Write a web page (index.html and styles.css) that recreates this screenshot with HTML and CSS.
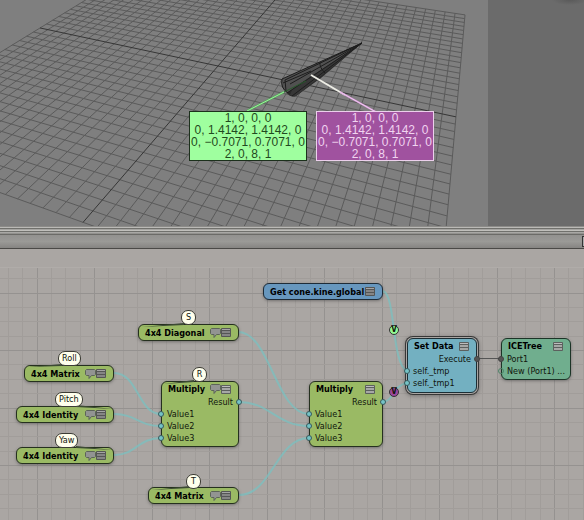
FILE: index.html
```
<!DOCTYPE html>
<html lang="en">
<head>
<meta charset="utf-8">
<title>ICE Tree</title>
<link rel="stylesheet" href="styles.css">
</head>
<body>
<svg class="defs" aria-hidden="true">
  <symbol id="note" viewBox="0 0 11 10">
    <path d="M1.500 .5h8l1 1v4l-1 1h-3l-2.500 3v-3h-2.500l-1-1v-4z" fill="#929492" stroke="#5c6458"/>
  </symbol>
  <symbol id="list" viewBox="0 0 10 9">
    <rect width="10" height="9" rx="1" fill="#555655"/>
    <path d="M1 1.500h8" stroke="#a4a4a4"/>
    <path d="M1 4h8M1 7h8" stroke="#858585" stroke-width="2"/>
  </symbol>
  <symbol id="list-light" viewBox="0 0 10 9">
    <rect width="10" height="9" rx="1" fill="#5c605e"/>
    <path d="M1 1.500h8" stroke="#bcbcbc"/>
    <path d="M1 4h8M1 7h8" stroke="#a6a8a6" stroke-width="2"/>
  </symbol>
</svg>

<main class="app">
  <section class="viewport" aria-label="Camera view">
    <div class="scene">
      <svg class="layer" aria-hidden="true">
        <g id="floor"></g>
        <path d="M362 43L282 79Q280 87 287 93Q291 98 296 96L322 77Z" fill="#515151"/>
        <path d="M362 43L306 80L287 93Q291 98 296 96L322 77Z" fill="#2b2b2b"/>
        <path d="M362 43L293 88L290 95L296 96Z" fill="#3d3d3d" opacity=".7"/>
        <path d="M362 43L282 79Q280 88 288 93M362 43L285 80L286 91M362 43L290 84M362 43L287 93M362 43L292 96M320 62Q319 67 325 73M283 83l28-12" fill="none" stroke="#1d1d1d"/>
        <path d="M247 111L284 92" stroke="#58a95c" stroke-width="2"/>
        <path d="M247 111L284 92" stroke="#9bf39c"/>
        <path d="M284 92L306 81" stroke="#285a2c"/>
        <path d="M311 75L345 95" stroke="#eeeee6" stroke-width="2"/>
        <path d="M340 92L376 112" stroke="#d08fd2" stroke-width="2"/>
        <path d="M340 92L376 112" stroke="#efcdf0"/>
      </svg>
      <div class="matrix matrix-green">1, 0, 0, 0<br>0, 1.4142, 1.4142, 0<br>0, −0.7071, 0.7071, 0<br>2, 0, 8, 1</div>
      <div class="matrix matrix-purple">1, 0, 0, 0<br>0, 1.4142, 1.4142, 0<br>0, −0.7071, 0.7071, 0<br>2, 0, 8, 1</div>
    </div>
    <div class="margin"></div>
  </section>
  <div class="splitter"></div>
  <header class="titlebar"><button class="maximize" type="button" aria-label="Maximize"></button></header>
  <div class="toolbar"></div>

  <section class="graph" aria-label="ICE tree">
    <svg class="layer" aria-hidden="true">
      <g id="paper"></g>
      <g class="wires">
        <path d="M238 64C270 64 276 146 309 146"/>
        <path d="M114 105C138 105 138 146 161 146"/>
        <path d="M114 146C136 146 138 158 161 158"/>
        <path d="M114 187C136 187 138 170 161 170"/>
        <path d="M239 134C270 134 276 158 309 158"/>
        <path d="M239 227C272 227 276 170 309 170"/>
        <path d="M383 23C396 27 391 95 407 103"/>
        <path d="M383 134C394 133 393 117 407 115"/>
        <path class="run" d="M477 90.500H501"/>
      </g>
    </svg>

    <article class="node bar green n-diagonal"><h2>4x4 Diagonal</h2><svg class="note"><use href="#note"/></svg><svg class="list"><use href="#list"/></svg></article>
    <article class="node bar green n-roll"><h2>4x4 Matrix</h2><svg class="note"><use href="#note"/></svg><svg class="list"><use href="#list"/></svg></article>
    <article class="node bar green n-pitch"><h2>4x4 Identity</h2><svg class="note"><use href="#note"/></svg><svg class="list"><use href="#list"/></svg></article>
    <article class="node bar green n-yaw"><h2>4x4 Identity</h2><svg class="note"><use href="#note"/></svg><svg class="list"><use href="#list"/></svg></article>
    <article class="node bar green n-trans"><h2>4x4 Matrix</h2><svg class="note"><use href="#note"/></svg><svg class="list"><use href="#list"/></svg></article>
    <article class="node bar blue n-get"><h2>Get cone.kine.global</h2><svg class="list"><use href="#list"/></svg></article>

    <article class="node green n-rotate">
      <header><h2>Multiply</h2><svg class="note"><use href="#note"/></svg><svg class="list"><use href="#list-light"/></svg></header>
      <ul>
        <li class="out">Result<i></i></li>
        <li><i></i>Value1</li>
        <li><i></i>Value2</li>
        <li><i></i>Value3</li>
      </ul>
    </article>
    <article class="node green n-multiply">
      <header><h2>Multiply</h2><svg class="list"><use href="#list-light"/></svg></header>
      <ul>
        <li class="out">Result<i></i></li>
        <li><i></i>Value1</li>
        <li><i></i>Value2</li>
        <li><i></i>Value3</li>
      </ul>
    </article>
    <article class="node cyan selected n-set">
      <header><h2>Set Data</h2><svg class="list"><use href="#list-light"/></svg></header>
      <ul>
        <li class="out">Execute<i class="run"></i></li>
        <li><i></i>self._tmp</li>
        <li><i></i>self._tmp1</li>
      </ul>
    </article>
    <article class="node teal n-tree">
      <header><h2>ICETree</h2><svg class="list"><use href="#list-light"/></svg></header>
      <ul>
        <li><i class="run"></i>Port1</li>
        <li><i class="empty"></i>New (Port1) ...</li>
      </ul>
    </article>

    <svg class="layer tails" aria-hidden="true">
      <path d="M62 96l-34 3l34-1zM76 137l37 4l-37-2zM76 178l37 4l-37-2zM184 55l-42 4l42-2zM194 112l-30 4l30-2zM190 218l-38 4l38-2z"/>
    </svg>
    <span class="tag t-roll">Roll</span>
    <span class="tag t-pitch">Pitch</span>
    <span class="tag t-yaw">Yaw</span>
    <span class="tag t-s">S</span>
    <span class="tag t-r">R</span>
    <span class="tag t-t">T</span>
    <span class="probe probe-green">V</span>
    <span class="probe probe-purple">V</span>
  </section>
</main>
<script src="grid.js"></script>
</body>
</html>
```
FILE: styles.css
```
* { box-sizing: border-box; }

body {
  margin: 0;
  font-family: "DejaVu Sans Condensed", "DejaVu Sans", sans-serif;
  font-size: 9px;
  line-height: 12px;
  color: #10150c;
  background: #aaa6a3;
}

h2, ul { margin: 0; padding: 0; }
.defs { position: absolute; width: 0; height: 0; }

.app {
  display: flex;
  flex-direction: column;
  min-height: 100vh;
  overflow: hidden;
}

.layer {
  position: absolute;
  inset: 0;
  width: 100%;
  height: 100%;
}

/* 3D view */
.viewport { display: flex; height: 226px; }
.scene {
  position: relative;
  flex: 1;
  overflow: hidden;
  background: #7f7f7f;
}
.margin {
  width: 96px;
  background: radial-gradient(ellipse 18px 5px at 82px 0, #5a5a5a, #6b6b6b);
}
#floor line { stroke: #5b5b5b; }
#floor .axis { stroke: #363636; }

.matrix {
  position: absolute;
  top: 111px;
  width: 118px;
  border: 1px solid;
  font: 12px/12px "Liberation Sans", sans-serif;
  text-align: center;
  white-space: nowrap;
}
.matrix-green { left: 189px; color: #1f4a20; background: #9fff9f; border-color: #1c301c; }
.matrix-purple { left: 316px; color: #f0d4f0; background: #a0529f; border-color: #ecd0ec; }

/* Panel chrome */
.splitter {
  height: 9px;
  background: linear-gradient(#8c8b88 0 1px, #bab9b6 1px 2px, #70706c 2px 3px, #a5a4a1 3px 4px, #c0bfbb 4px 5px, #70706c 5px 6px, #a9a8a5 6px 7px, #92918e 7px 8px, #6c6b68 8px);
}
.titlebar {
  display: flex;
  justify-content: flex-end;
  align-items: center;
  height: 14px;
  overflow: hidden;
  border-bottom: 1px solid #4b4947;
  background: linear-gradient(#92918f, #9b9a97 50%, #868482);
}
.maximize {
  width: 10px;
  height: 11px;
  margin-right: -8px;
  padding: 0;
  flex: none;
  border: 1px solid #333;
  background: #aaa;
}
.toolbar { height: 19px; background: #aaa6a3; border-bottom: 1px solid #b0aca9; }

/* Node graph */
.graph { position: relative; flex: 1; min-height: 252px; background: #aaa6a3; }
#paper line { stroke: #a19d9a; }
#paper .major { stroke: #959290; }
.wires { fill: none; stroke: #79c0c0; stroke-width: 2; stroke-opacity: .75; }
.wires .run { stroke: #555; stroke-width: 1; stroke-opacity: 1; }
.tails { fill: #3c4a34; }

.node {
  position: absolute;
  border: 1px solid #25301f;
  border-radius: 6px;
  box-shadow: 0 1px 3px #4448;
}
.node h2 { flex: 1; font-size: 9px; line-height: 14px; font-weight: bold; white-space: nowrap; color: #000; }
.bar { display: flex; align-items: center; height: 17px; padding: 0 7px 0 6px; }
.node header { display: flex; align-items: center; height: 14px; padding: 0 7px 0 6px; }
.node ul { list-style: none; padding-bottom: 2px; }
.node li { position: relative; height: 12px; padding: 0 5px; white-space: nowrap; }
.node .out { text-align: right; }
.node svg { flex: none; }
.note { width: 11px; height: 10px; }
.list { width: 10px; height: 9px; }

.node i {
  position: absolute;
  left: -4px;
  top: 3px;
  width: 6px;
  height: 6px;
  border: 1px solid #37595c;
  border-radius: 50%;
  background: #75c3c6;
}
.node .out i { left: auto; right: -4px; }
.node .run { background: #555; border-color: #444; }
.node .empty { background: none; border-color: #4d8568; }

.green { background: #9aba64; }
.blue { background: #6797be; border-color: #1e2c38; }
.cyan { background: #73b0c1; border-color: #1b2e35; }
.teal { background: #70ae8e; border-color: #1c3427; }
.selected { box-shadow: 0 0 0 1px #aaa6a3, 0 0 0 2px #363636, 0 1px 4px 2px #4448; }

.n-diagonal { left: 138px; top: 56px; width: 101px; }
.n-roll { left: 24px; top: 97px; width: 90px; }
.n-pitch { left: 16px; top: 138px; width: 98px; }
.n-yaw { left: 16px; top: 179px; width: 98px; }
.n-trans { left: 148px; top: 219px; width: 91px; }
.n-get { left: 263px; top: 15px; width: 120px; }
.n-rotate { left: 161px; top: 113px; width: 78px; }
.n-multiply { left: 309px; top: 113px; width: 74px; }
.n-set { left: 407px; top: 70px; width: 70px; padding-bottom: 1px; }
.n-tree { left: 501px; top: 70px; width: 70px; }

.tag {
  position: absolute;
  min-width: 15px;
  height: 15px;
  padding: 0 3px;
  border: 1px solid #3b3b34;
  border-radius: 7px;
  background: #ffffec;
  line-height: 13px;
  text-align: center;
}
.t-roll { left: 58px; top: 83px; }
.t-pitch { left: 55px; top: 124px; }
.t-yaw { left: 55px; top: 165px; }
.t-s { left: 181px; top: 42px; }
.t-r { left: 192px; top: 99px; }
.t-t { left: 186px; top: 206px; }

.probe {
  position: absolute;
  left: 389px;
  width: 10px;
  height: 10px;
  border: 1px solid #333;
  border-radius: 50%;
  font-weight: bold;
  font-size: 8px;
  line-height: 8px;
  text-align: center;
}
.probe-green { top: 57px; background: #93fa93; }
.probe-purple { top: 119px; background: #9a479c; }
```
FILE: grid.js
```
const NS = 'http://www.w3.org/2000/svg';

function line(parent, x1, y1, x2, y2, cls) {
  const el = document.createElementNS(NS, 'line');
  Object.entries({ x1, y1, x2, y2 }).forEach(([k, v]) => el.setAttribute(k, v));
  if (cls) el.setAttribute('class', cls);
  parent.appendChild(el);
}

// Perspective projection of the floor plane, u and v in -1..1.
function project(u, v) {
  const w = 1 - 0.1442 * u + 0.333 * v;
  return [(172.2 * u + 162.6 * v + 218) / w, (34 * u - 82.3 * v + 66) / w];
}

const floor = document.getElementById('floor');
const cells = 20;
for (let i = -cells; i <= cells; i++) {
  if (i === 0) continue;
  const t = i / cells;
  line(floor, ...project(t, -1), ...project(t, 1));
  line(floor, ...project(-1, t), ...project(1, t));
}
line(floor, ...project(0, -1), ...project(0, 1), 'axis');
line(floor, ...project(-1, 0), ...project(1, 0), 'axis');

// Graph paper: a major line on every fourth division.
const paper = document.getElementById('paper');
const step = 115 / 8;
const cols = Math.ceil(screen.width / step);
for (let i = -6; i < cols; i++) {
  const x = Math.round(94 + i * step) + 0.5;
  line(paper, x, 0, x, '100%', i % 4 === 0 ? 'major' : '');
}
for (let i = -5; i < cols; i++) {
  const y = Math.round(82 + i * step) + 0.5;
  line(paper, 0, y, '100%', y, i % 4 === 0 ? 'major' : '');
}
```
